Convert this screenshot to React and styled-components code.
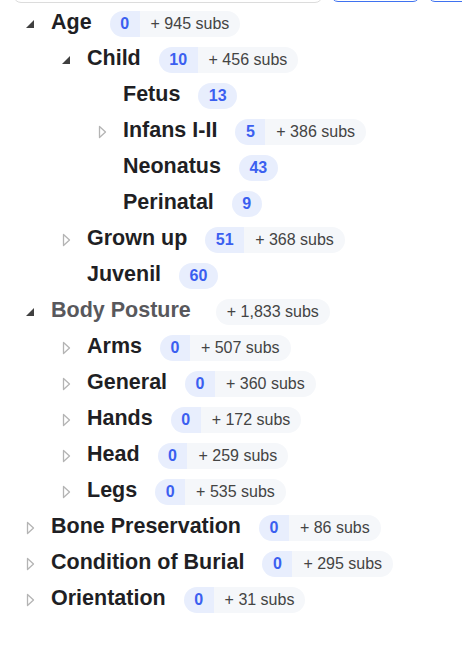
import React from "react";
import styled, { createGlobalStyle } from "styled-components";

const Global = createGlobalStyle`
  html, body { margin: 0; padding: 0; background: #fff; }
  body { font-family: "Liberation Sans", Arial, sans-serif; overflow: hidden; }
`;

const Page = styled.div`
  width: 462px;
  height: 646px;
  overflow: hidden;
`;

const TopBar = styled.div`
  display: flex;
  gap: 8px;
  height: 40px;
  margin-top: -36px;
  padding-left: 13px;
  overflow: hidden;
`;

const SearchBox = styled.div`
  width: 310px;
  flex-shrink: 0;
  height: 39px;
  border: 1px solid #dcdcdc;
  border-radius: 8px;
  box-sizing: border-box;
`;

const TopButton = styled.div`
  width: ${(p) => p.$w}px;
  flex-shrink: 0;
  height: 38px;
  border: 1.5px solid #3f72f0;
  border-radius: 7px;
  box-sizing: border-box;
`;

const Tree = styled.ul`
  list-style: none;
  margin: 0;
  padding: 1px 0 0 23px;
`;

const Row = styled.li`
  display: flex;
  align-items: center;
  height: 36px;
  padding-left: ${(p) => p.$depth * 36}px;
`;

const Toggle = styled.span`
  width: 28px;
  height: 36px;
  display: flex;
  align-items: center;
  flex-shrink: 0;
`;

const Label = styled.span`
  font-weight: 700;
  font-size: 21.5px;
  color: ${(p) => (p.$muted ? "#58585c" : "#1f1f24")};
  margin-right: ${(p) => (p.$muted ? 25 : 18)}px;
  white-space: nowrap;
  position: relative;
  top: -1px;
`;

const Pill = styled.span`
  display: inline-flex;
  height: 26px;
  border-radius: 13px;
  overflow: hidden;
  font-size: 16px;
  line-height: 26px;
  white-space: nowrap;
  position: relative;
  top: 1px;
`;

const Count = styled.span`
  background: #e8eefd;
  color: #3b5ff0;
  font-weight: 700;
  padding: 0 10.5px;
`;

const Subs = styled.span`
  background: #f5f7fa;
  color: #444;
  padding: 0 11px 0 11px;
`;

const Expanded = () => (
  <svg width="10" height="10" viewBox="0 0 10 10" style={{ marginLeft: 2, marginTop: 1 }}>
    <path d="M9 1 L9 9 L1 9 Z" fill="#404040" />
  </svg>
);

const Collapsed = () => (
  <svg width="10" height="14" viewBox="0 0 10 14" style={{ marginLeft: 3, marginTop: 2 }}>
    <path d="M1.5 1.5 L7.5 7 L1.5 12.5 Z" fill="none" stroke="#b4b4b4" strokeWidth="1.3" strokeLinejoin="round" />
  </svg>
);

const nodes = [
  { d: 0, t: "Age", c: "0", s: "945", st: "open" },
  { d: 1, t: "Child", c: "10", s: "456", st: "open" },
  { d: 2, t: "Fetus", c: "13" },
  { d: 2, t: "Infans I-II", c: "5", s: "386", st: "closed" },
  { d: 2, t: "Neonatus", c: "43" },
  { d: 2, t: "Perinatal", c: "9" },
  { d: 1, t: "Grown up", c: "51", s: "368", st: "closed" },
  { d: 1, t: "Juvenil", c: "60" },
  { d: 0, t: "Body Posture", s: "1,833", st: "open", muted: true },
  { d: 1, t: "Arms", c: "0", s: "507", st: "closed" },
  { d: 1, t: "General", c: "0", s: "360", st: "closed" },
  { d: 1, t: "Hands", c: "0", s: "172", st: "closed" },
  { d: 1, t: "Head", c: "0", s: "259", st: "closed" },
  { d: 1, t: "Legs", c: "0", s: "535", st: "closed" },
  { d: 0, t: "Bone Preservation", c: "0", s: "86", st: "closed" },
  { d: 0, t: "Condition of Burial", c: "0", s: "295", st: "closed" },
  { d: 0, t: "Orientation", c: "0", s: "31", st: "closed" },
];

export default function App() {
  return (
    <Page>
      <Global />
      <TopBar>
        <SearchBox />
        <TopButton $w={89} />
        <TopButton $w={60} />
      </TopBar>
      <Tree>
        {nodes.map((n, i) => (
          <Row key={i} $depth={n.d}>
            <Toggle>
              {n.st === "open" && <Expanded />}
              {n.st === "closed" && <Collapsed />}
            </Toggle>
            <Label $muted={n.muted}>{n.t}</Label>
            <Pill>
              {n.c !== undefined && <Count>{n.c}</Count>}
              {n.s && <Subs>+ {n.s} subs</Subs>}
            </Pill>
          </Row>
        ))}
      </Tree>
    </Page>
  );
}
